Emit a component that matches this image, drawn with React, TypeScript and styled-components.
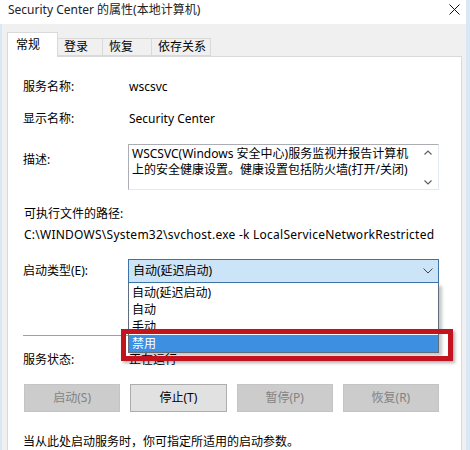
import React from "react";
import styled, { createGlobalStyle } from "styled-components";

const Global = createGlobalStyle`
  html, body { margin: 0; padding: 0; background: #f0f0f0; }
  body {
    font-family: "Noto Sans", "Noto Sans CJK SC", sans-serif;
    font-size: 12px;
    color: #000;
  }
`;

const Window = styled.div`
  width: 470px;
  height: 450px;
  box-sizing: border-box;
  display: flex;
  flex-direction: column;
  background: #f0f0f0;
  border-right: 4px solid #dae8f5;
  overflow: hidden;
`;

const TitleBar = styled.div`
  height: 24px;
  flex: none;
  background: #fff;
  display: flex;
  align-items: flex-start;
  justify-content: space-between;
  padding: 2px 6px 0 8px;
  box-sizing: border-box;
  line-height: 16px;
  color: #222;
`;

const CloseIcon = styled.svg`
  margin-top: 2px;
  flex: none;
`;

const Body = styled.div`
  flex: 1;
  display: flex;
  flex-direction: column;
  border-left: 2px solid #dae8f5;
  padding: 9px 4px 0 5px;
  min-height: 0;
`;

const TabStrip = styled.div`
  display: flex;
  align-items: flex-end;
  height: 24px;
  flex: none;
  margin-bottom: -1px;
  position: relative;
  z-index: 1;
`;

const Tab = styled.div<{ $w: number; $active?: boolean }>`
  width: ${(p) => p.$w}px;
  box-sizing: border-box;
  height: ${(p) => (p.$active ? 25 : 18)}px;
  display: flex;
  align-items: center;
  padding-left: ${(p) => (p.$active ? 8 : 6)}px;
  line-height: 16px;
  background: ${(p) => (p.$active ? "#fff" : "#f0f0f0")};
  border: 1px solid #d9d9d9;
  border-bottom: ${(p) => (p.$active ? "none" : "1px solid #d9d9d9")};
  margin-left: ${(p) => (p.$active ? 0 : -1)}px;
  align-self: flex-end;
  margin-bottom: ${(p) => (p.$active ? 0 : 1)}px;
`;

const Panel = styled.div`
  flex: 1;
  background: #fff;
  border: 1px solid #d9d9d9;
  padding: 22px 22px 0 15px;
  display: flex;
  flex-direction: column;
  line-height: 16px;
`;

const Row = styled.div<{ $mt?: number; $align?: string }>`
  display: flex;
  align-items: ${(p) => p.$align || "center"};
  margin-top: ${(p) => p.$mt || 0}px;
  flex: none;
`;

const Label = styled.div<{ $mt?: number }>`
  width: 105px;
  flex: none;
  margin-top: ${(p) => p.$mt || 0}px;
`;

const Value = styled.div`
  padding-left: 1px;
  white-space: nowrap;
`;

const TextArea = styled.div`
  flex: 1;
  height: 46px;
  box-sizing: border-box;
  border: 1px solid #abadb3;
  border-right-color: #e3e9ef;
  border-bottom-color: #e3e9ef;
  display: flex;
  background: #fff;
`;

const TextContent = styled.div`
  flex: 1;
  padding: 1px 0 0 3px;
  line-height: 16px;
  white-space: nowrap;
  overflow: hidden;
`;

const ScrollBar = styled.div`
  width: 17px;
  flex: none;
  display: flex;
  flex-direction: column;
  justify-content: space-between;
  align-items: center;
  padding: 5px 2px 4px 0;
  background: #fff;
`;

const PathText = styled.div<{ $mt?: number; $spread?: boolean }>`
  margin-top: ${(p) => p.$mt || 0}px;
  padding-left: 1px;
  white-space: nowrap;
  flex: none;
  letter-spacing: ${(p) => (p.$spread ? "0.25px" : "0")};
`;

const ComboWrap = styled.div`
  flex: 1;
  position: relative;
`;

const Combo = styled.div`
  height: 24px;
  box-sizing: border-box;
  background: #cce4f7;
  border: 1px solid #3c74a8;
  display: flex;
  align-items: center;
  justify-content: space-between;
  padding: 0 5px 0 4px;
`;

const DropList = styled.div`
  position: absolute;
  top: 100%;
  left: 0;
  right: 0;
  z-index: 5;
  background: #fff;
  border: 1px solid #5e6e7e;
  border-top: none;
  padding-top: 1px;
  box-shadow: 3px 3px 3px rgba(0, 0, 0, 0.22);
`;

const DropItem = styled.div<{ $selected?: boolean }>`
  height: 17px;
  line-height: 17px;
  padding-left: 3px;
  background: ${(p) => (p.$selected ? "#3d8fe2" : "transparent")};
  color: ${(p) => (p.$selected ? "#fff" : "#000")};
`;

const Highlight = styled.div`
  position: absolute;
  top: 70px;
  left: -7px;
  right: -14px;
  height: 32px;
  box-sizing: border-box;
  border: 5px solid #c3131f;
  z-index: 6;
  box-shadow: 2px 2px 3px rgba(0, 0, 0, 0.3);
`;

const Separator = styled.div<{ $mt: number }>`
  height: 1px;
  background: #a0a0a0;
  margin-top: ${(p) => p.$mt}px;
  flex: none;
`;

const ButtonRow = styled.div<{ $mt: number }>`
  display: grid;
  grid-template-columns: repeat(4, 1fr);
  column-gap: 10px;
  margin-top: ${(p) => p.$mt}px;
  padding-left: 1px;
  flex: none;
`;

const Button = styled.div<{ $disabled?: boolean }>`
  height: 28px;
  box-sizing: border-box;
  display: flex;
  align-items: center;
  justify-content: center;
  background: ${(p) => (p.$disabled ? "#cccccc" : "#e1e1e1")};
  border: 1px solid ${(p) => (p.$disabled ? "#c4c4c4" : "#adadad")};
  color: ${(p) => (p.$disabled ? "#838383" : "#000")};
`;

const Note = styled.div<{ $mt: number }>`
  margin-top: ${(p) => p.$mt}px;
  white-space: nowrap;
  flex: none;
`;

const Chevron = ({ up }: { up?: boolean }) => (
  <svg width="8" height="5" viewBox="0 0 8 5">
    <path
      d={up ? "M0.5 4.5 L4 1 L7.5 4.5" : "M0.5 0.5 L4 4 L7.5 0.5"}
      fill="none"
      stroke="#606060"
      strokeWidth="1.2"
    />
  </svg>
);

export default function App() {
  return (
    <>
      <Global />
      <Window>
        <TitleBar>
          <span>Security Center 的属性(本地计算机)</span>
          <CloseIcon width="11" height="11" viewBox="0 0 11 11">
            <path d="M0.5 0.5 L10.5 10.5 M10.5 0.5 L0.5 10.5" stroke="#111" strokeWidth="1" />
          </CloseIcon>
        </TitleBar>
        <Body>
          <TabStrip>
            <Tab $w={51} $active>常规</Tab>
            <Tab $w={46}>登录</Tab>
            <Tab $w={50}>恢复</Tab>
            <Tab $w={60}>依存关系</Tab>
          </TabStrip>
          <Panel>
            <Row>
              <Label>服务名称:</Label>
              <Value>wscsvc</Value>
            </Row>
            <Row $mt={16}>
              <Label>显示名称:</Label>
              <Value>Security Center</Value>
            </Row>
            <Row $mt={17} $align="flex-start">
              <Label $mt={8}>描述:</Label>
              <TextArea>
                <TextContent>
                  WSCSVC(Windows 安全中心)服务监视并报告计算机
                  <br />
                  上的安全健康设置。健康设置包括防火墙(打开/关闭)
                </TextContent>
                <ScrollBar>
                  <Chevron up />
                  <Chevron />
                </ScrollBar>
              </TextArea>
            </Row>
            <PathText $mt={16}>可执行文件的路径:</PathText>
            <PathText $mt={5} $spread>
              C:\WINDOWS\System32\svchost.exe -k LocalServiceNetworkRestricted
            </PathText>
            <Row $mt={16}>
              <Label>启动类型(E):</Label>
              <ComboWrap>
                <Combo>
                  <span>自动(延迟启动)</span>
                  <svg width="10" height="6" viewBox="0 0 10 6">
                    <path d="M0.5 0.5 L5 5 L9.5 0.5" fill="none" stroke="#444" strokeWidth="1" />
                  </svg>
                </Combo>
                <DropList>
                  <DropItem>自动(延迟启动)</DropItem>
                  <DropItem>自动</DropItem>
                  <DropItem>手动</DropItem>
                  <DropItem $selected>禁用</DropItem>
                </DropList>
                <Highlight />
              </ComboWrap>
            </Row>
            <Separator $mt={52} />
            <Row $mt={16}>
              <Label>服务状态:</Label>
              <Value>正在运行</Value>
            </Row>
            <ButtonRow $mt={16}>
              <Button $disabled>启动(S)</Button>
              <Button>停止(T)</Button>
              <Button $disabled>暂停(P)</Button>
              <Button $disabled>恢复(R)</Button>
            </ButtonRow>
            <Note $mt={22}>当从此处启动服务时，你可指定所适用的启动参数。</Note>
          </Panel>
        </Body>
      </Window>
    </>
  );
}
